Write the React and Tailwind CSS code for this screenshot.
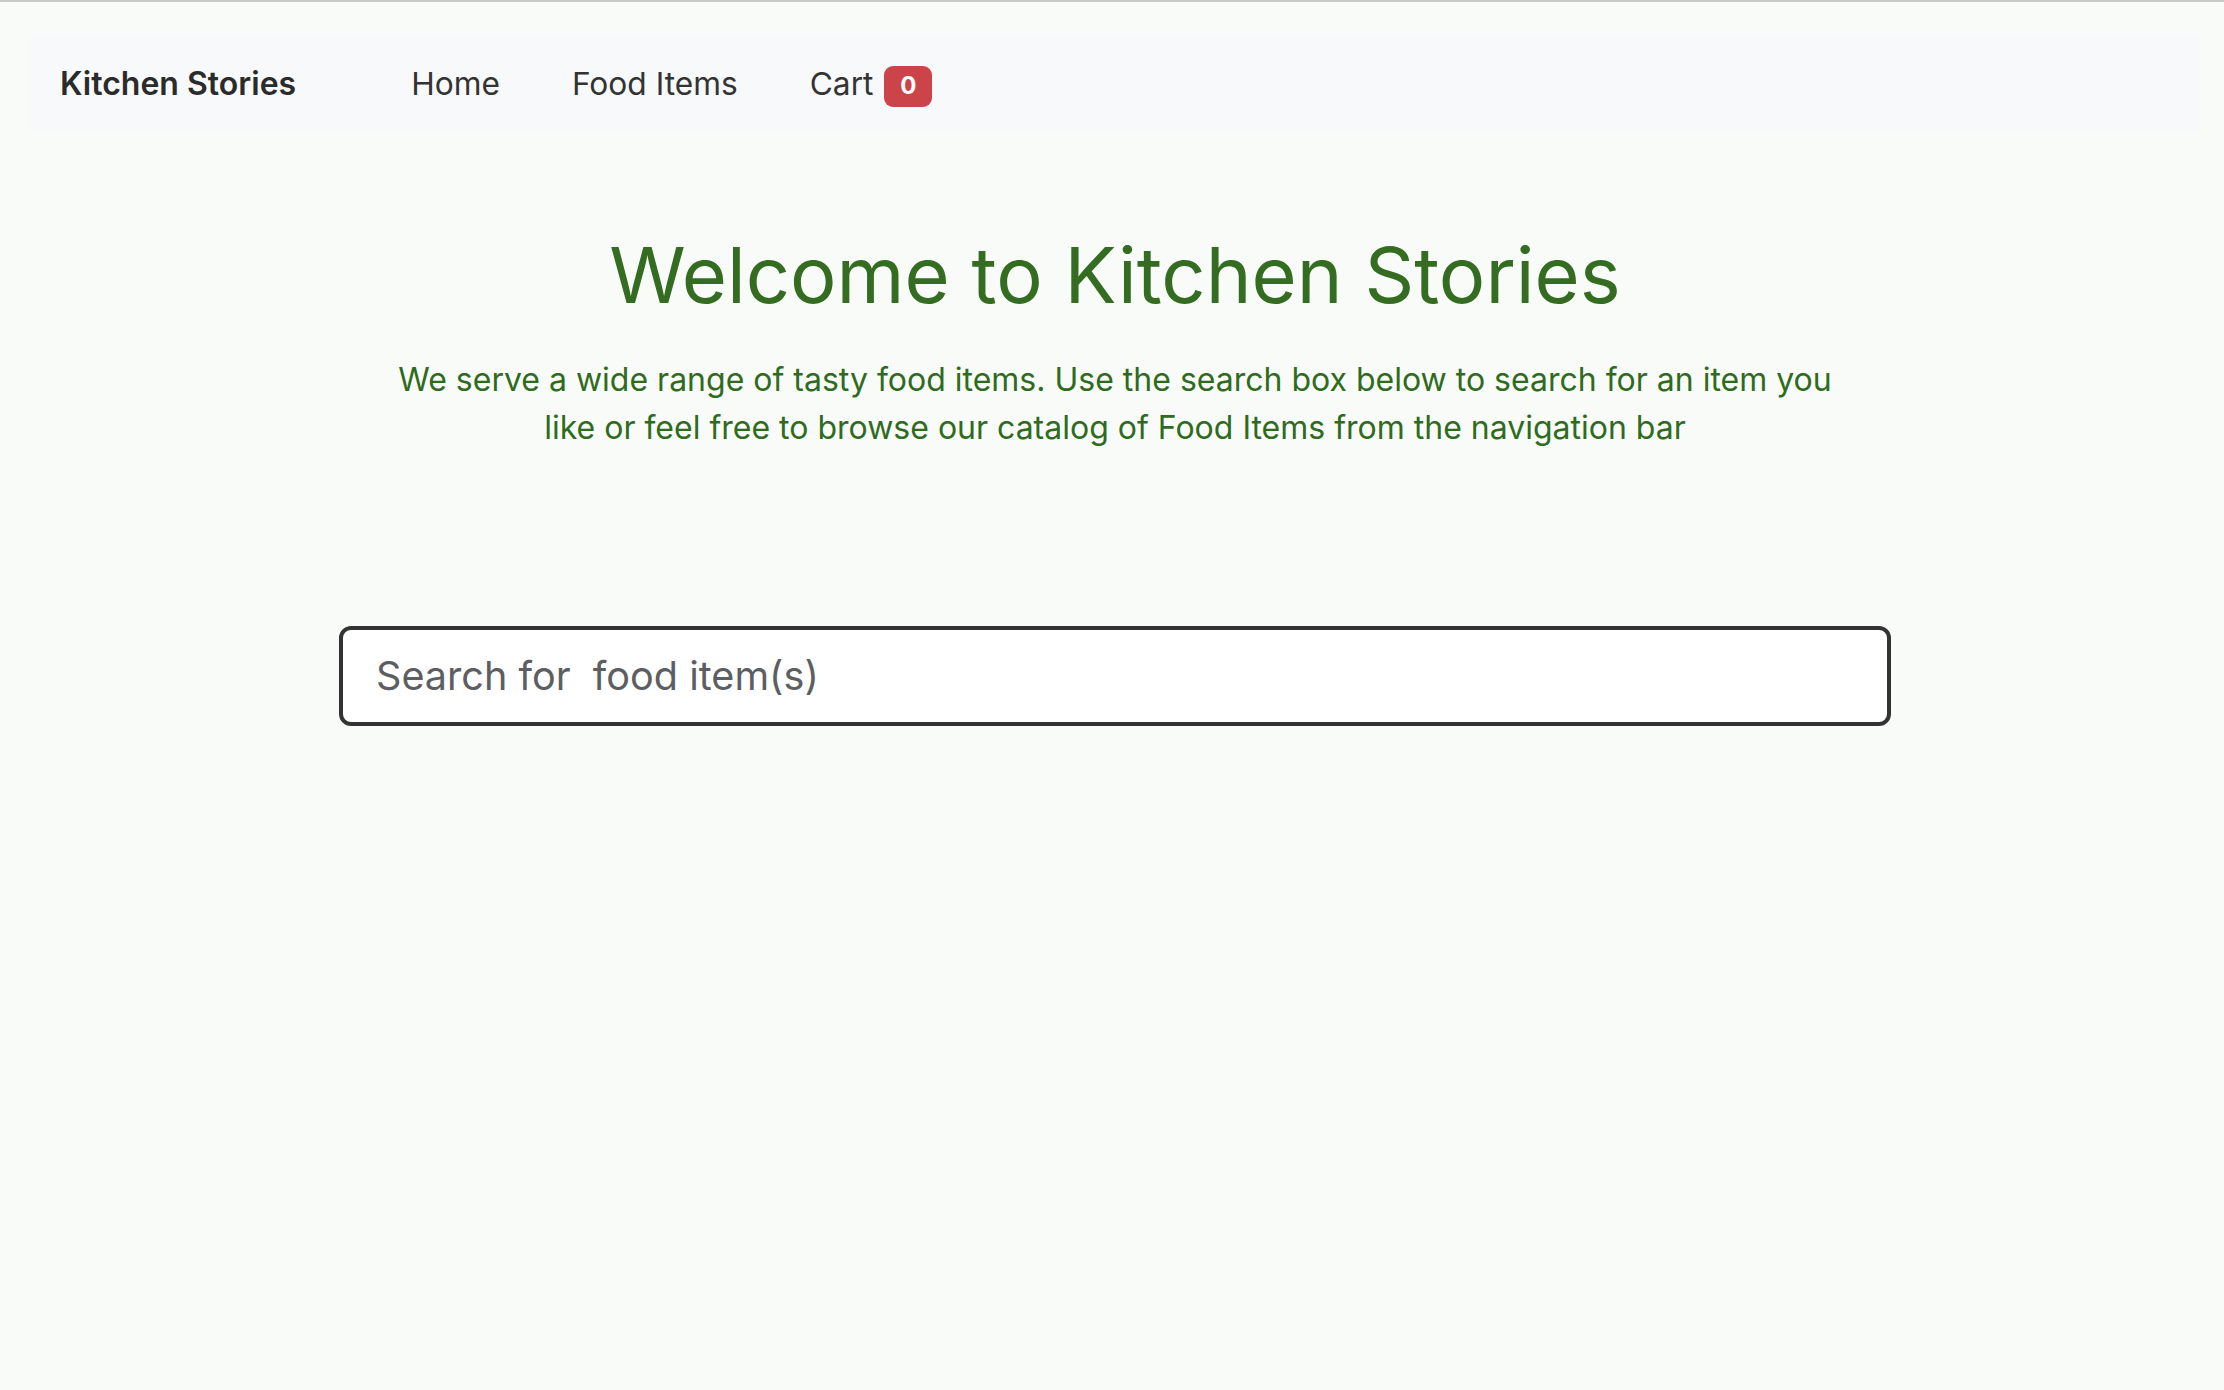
import React from "react";

export default function App() {
  return (
    <div className="min-h-screen bg-[#f9fbf8] font-['Inter',sans-serif]">
      <div className="h-[2px] bg-[#c9cbc7]" />
      <div className="ml-[30px] mr-[24px] pt-[32px]">
        <nav className="flex h-[99px] items-center bg-[#f8f9fa] pl-[30px]">
          <span className="text-[32px] font-semibold text-[#2b2b2b]">
            Kitchen Stories
          </span>
          <div className="ml-[115px] flex items-center gap-[73px] text-[31.7px] text-[#333333]">
            <span>Home</span>
            <span className="-ml-[1px]">Food Items</span>
            <span className="-ml-[1px] flex items-center">
              Cart
              <span className="ml-[11px] mt-[6px] flex h-[41px] w-[48px] items-center justify-center rounded-[9px] bg-[#cb444a] text-[24px] font-bold text-white">
                0
              </span>
            </span>
          </div>
        </nav>
        <main className="flex flex-col items-center">
          <h1 className="mt-[96px] text-[77.6px] font-normal leading-[1.2] text-[#346c22]">
            Welcome to Kitchen Stories
          </h1>
          <p className="mt-[34px] w-[1480px] text-center text-[32px] leading-[1.5] text-[#2f6b1e]">
            We serve a wide range of tasty food items. Use the search box below to search for an item you
            like or feel free to browse our catalog of Food Items from the navigation bar
          </p>
          <input
            type="text"
            placeholder="Search for  food item(s)"
            className="mt-[174px] h-[100px] w-[1552px] rounded-[12px] border-[4px] border-[#333333] bg-white px-[33px] text-[39.6px] text-[#333] outline-none placeholder:text-[#5d5e62]"
          />
        </main>
      </div>
    </div>
  );
}
